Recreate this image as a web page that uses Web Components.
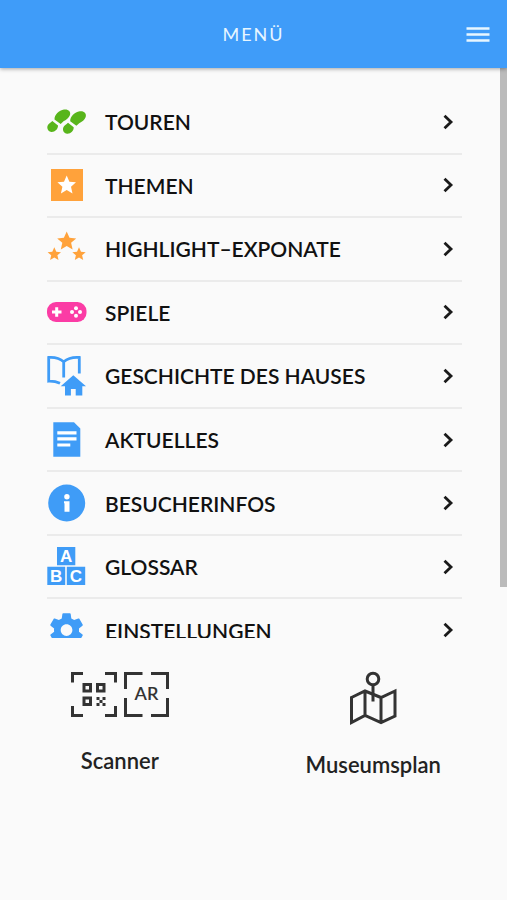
<!DOCTYPE html>
<html lang="de">
<head>
<meta charset="utf-8">
<meta name="viewport" content="width=device-width, initial-scale=1">
<title>Menü</title>
<style>
    body {
        margin: 0;
        background: #fafafa;
        font-family: Lato, "Noto Sans", sans-serif;
    }
</style>
</head>
<body>
<museum-app>
    <app-header slot="header">MENÜ</app-header>

    <menu-item href="#touren">
        <svg slot="icon" viewBox="0 0 40 40" fill="#58b51b">
            <path d="M7.500 17.500C7.300 13 12 8 17 7.500C21.500 7 24 9.500 23 13C22 16 19 18 16.500 19.300L13.700 22Z"/>
            <path d="M5.300 19L11 23.500C11.200 27 8 30.200 4.500 30C1 29.600 -.5 26.500 .7 23.500C1.500 21.500 3.500 20.800 5.300 19Z"/>
            <path d="M23.200 19.200C23 14.700 27.700 9.700 32.700 9.200C37.200 8.700 39.700 11.200 38.700 15C37.700 18 35 19.800 32.200 21.200L29.400 23.800Z"/>
            <path d="M21 20.800L26.700 25.300C26.900 28.800 23.700 32 20.200 31.800C16.700 31.400 15.200 28.300 16.400 25.300C17.200 23.300 19.200 22.600 21 20.800Z"/>
        </svg>
        TOUREN
    </menu-item>
    <menu-item href="#themen">
        <svg slot="icon" viewBox="0 0 40 40">
            <rect x="4" y="4" width="32" height="32" fill="#ffa23b"/>
            <path fill="#fff" d="M19.700 10.500L22.400 16.800L29 17.300L24 21.700L25.500 28.500L19.700 25L13.900 28.500L15.400 21.700L10.400 17.300L17 16.800Z"/>
        </svg>
        THEMEN
    </menu-item>
    <menu-item href="#highlights">
        <svg slot="icon" viewBox="0 0 40 40" fill="#ffa23b">
            <path d="M19.700 2.500L22.500 8.800L29.200 9.400L24.100 13.800L25.600 20.500L19.700 17L13.800 20.500L15.300 13.800L10.200 9.400L16.900 8.800Z"/>
            <path d="M7.300 18.200L9.300 22.700L14 23.200L10.400 26.300L11.500 31L7.300 28.600L3.100 31L4.200 26.300L.6 23.200L5.300 22.700Z"/>
            <path d="M32 18.200L34 22.700L38.700 23.200L35.100 26.300L36.200 31L32 28.600L27.800 31L28.900 26.300L25.300 23.200L30 22.700Z"/>
        </svg>
        HIGHLIGHT–EXPONATE
    </menu-item>
    <menu-item href="#spiele">
        <svg slot="icon" viewBox="0 0 40 40">
            <rect x="0" y="10" width="39.500" height="20" rx="9" fill="#fb3ca5"/>
            <path d="M5 20H14.500M9.700 15.200V24.800" stroke="#fff" stroke-width="3"/>
            <g fill="#fff">
                <circle cx="29" cy="16.200" r="2"/>
                <circle cx="29" cy="23.800" r="2"/>
                <circle cx="25" cy="20" r="2"/>
                <circle cx="33" cy="20" r="2"/>
            </g>
        </svg>
        SPIELE
    </menu-item>
    <menu-item href="#geschichte">
        <svg slot="icon" viewBox="0 0 40 40">
            <path fill="none" stroke="#3f9cf7" stroke-width="2.800" d="M13 27.200Q8 25 1.700 25.200V1.500Q11 .8 16.700 5.800Q22.500 .8 32.300 1.500V17.500M16.700 5.800V21.500"/>
            <path fill="#3f9cf7" d="M26.300 19.200L39 30.300H35.300V39.500H28.700V33H23.900V39.500H18V30.300H13.700Z"/>
        </svg>
        GESCHICHTE DES HAUSES
    </menu-item>
    <menu-item href="#aktuelles">
        <svg slot="icon" viewBox="0 0 40 40">
            <path fill="#3f9cf7" d="M6.300 2.300H27L33.300 8.500V36.700H6.300Z"/>
            <path stroke="#fff" stroke-width="3.200" d="M10.300 12.800H29.500M10.300 18.900H29.500M10.300 25H23.300"/>
        </svg>
        AKTUELLES
    </menu-item>
    <menu-item href="#besucherinfos">
        <svg slot="icon" viewBox="0 0 40 40">
            <circle cx="19.700" cy="20" r="18.500" fill="#3f9cf7"/>
            <circle cx="19.900" cy="13.800" r="2.700" fill="#fff"/>
            <path fill="#fff" d="M17 18.200H22.500V28.800H17.500V20.200H17Z"/>
        </svg>
        BESUCHERINFOS
    </menu-item>
    <menu-item href="#glossar">
        <svg slot="icon" viewBox="0 0 40 40">
            <path fill="#3f9cf7" d="M10 0H28.300V18.300H10ZM.300 19.700H18.200V38H.300ZM19.800 19.700H38.200V38H19.800Z"/>
            <g fill="#fff" font-family="Liberation Sans, sans-serif" font-size="17" font-weight="700" text-anchor="middle">
                <text x="19.200" y="15.200">A</text>
                <text x="9.200" y="34.800">B</text>
                <text x="29" y="34.800">C</text>
            </g>
        </svg>
        GLOSSAR
    </menu-item>
    <menu-item href="#einstellungen">
        <svg slot="icon" viewBox="0 0 40 40">
            <path fill="#3f9cf7" transform="translate(-.500 0) scale(1.670)" d="M19.430 12.980c.04-.32.07-.64.07-.98s-.03-.66-.07-.98l2.110-1.650c.19-.15.24-.42.12-.64l-2-3.460c-.12-.22-.39-.3-.61-.22l-2.490 1c-.52-.4-1.080-.73-1.690-.98l-.38-2.650C14.460 2.180 14.250 2 14 2h-4c-.25 0-.46.18-.49.42l-.38 2.650c-.61.25-1.170.59-1.690.98l-2.490-1c-.23-.09-.49 0-.61.22l-2 3.460c-.13.22-.07.49.12.64l2.110 1.650c-.04.32-.07.65-.07.98s.03.66.07.98l-2.110 1.650c-.19.15-.24.42-.12.64l2 3.460c.12.22.39.3.61.22l2.490-1c.52.4 1.080.73 1.690.98l.38 2.650c.03.24.24.42.49.42h4c.25 0 .46-.18.49-.42l.38-2.650c.61-.25 1.170-.59 1.690-.98l2.490 1c.23.09.49 0 .61-.22l2-3.460c.12-.22.07-.49-.12-.64l-2.110-1.650zM12 15.500c-1.930 0-3.500-1.570-3.500-3.500s1.570-3.500 3.500-3.500 3.500 1.570 3.500 3.500-1.570 3.500-3.500 3.500z"/>
        </svg>
        EINSTELLUNGEN
    </menu-item>

    <quick-link slot="footer" href="#scanner">
        <svg slot="icon" width="98" height="50" viewBox="0 0 98 50" fill="none" stroke="#333" stroke-width="3">
            <path d="M1.500 11.500V2.500H12M34 2.500H44.500V11.500M44.500 35V44.500H34M12 44.500H1.500V35"/>
            <path d="M54.500 18V2.500H71.500M80 2.500H96.500V18M96.500 27V44.500H80M71.500 44.500H54.500V27"/>
            <path d="M13 13.500H19.500V20H13ZM26.500 13.500H33V20H26.500ZM13 27H19.500V33.500H13Z"/>
            <path fill="#333" stroke="none" d="M25.500 26h3v3h-3zM31.500 26h3v3h-3zM28.500 29h3v3h-3zM25.500 32h3v3h-3zM31.500 32h3v3h-3z"/>
            <text x="75.500" y="29" fill="#333" stroke="none" font-size="18" font-weight="600" font-family="Lato, sans-serif" text-anchor="middle">AR</text>
        </svg>
        Scanner
    </quick-link>
    <quick-link slot="footer" href="#museumsplan">
        <svg slot="icon" width="48" height="54" viewBox="0 0 48 54" fill="none" stroke="#333" stroke-width="3">
            <path d="M2.500 26.500L16 20L32 26.500L46 20V45L32 51.500L16 44.500L2.500 51.500ZM16 20V44.500M32 26.500V51.500"/>
            <circle cx="24" cy="8" r="5.800"/>
            <path d="M24 14V30.500"/>
        </svg>
        Museumsplan
    </quick-link>
</museum-app>

<script>
class MuseumApp extends HTMLElement {
    constructor() {
        super();
        this.attachShadow({ mode: 'open' });
    }

    connectedCallback() {
        const style = `
            <style>
                :host {
                    display: flex;
                    flex-direction: column;
                    height: 100vh;
                    overflow: hidden;
                }
                main {
                    flex: 1;
                    min-height: 0;
                    position: relative;
                    overflow: hidden;
                    box-sizing: border-box;
                    padding: 23px 45px 0 47px;
                }
                nav {
                    display: grid;
                    grid-template-rows: repeat(9, 1fr);
                    height: 572px;
                }
                .thumb {
                    position: absolute;
                    top: 0;
                    right: 0;
                    width: 7px;
                    height: 91%;
                    background: #bbb;
                }
                footer {
                    display: flex;
                    min-height: 229px;
                    padding-top: 33px;
                }
            </style>
        `;

        const template = `
            <slot name="header"></slot>
            <main>
                <nav><slot></slot></nav>
                <div class="thumb"></div>
            </main>
            <footer><slot name="footer"></slot></footer>
        `;

        this.shadowRoot.innerHTML = style + template;
    }
}

class AppHeader extends HTMLElement {
    constructor() {
        super();
        this.attachShadow({ mode: 'open' });
    }

    connectedCallback() {
        const style = `
            <style>
                :host {
                    display: block;
                    flex: none;
                    position: relative;
                    z-index: 1;
                    background: #3f9cf9;
                    color: #e8f6ff;
                    box-shadow: 0 1px 4px rgba(0, 0, 0, 0.35);
                }
                header {
                    display: grid;
                    grid-template-columns: 1fr auto 1fr;
                    align-items: center;
                    height: 68px;
                    padding: 0 16px;
                }
                h1 {
                    grid-column: 2;
                    margin: 0;
                    font-size: 18px;
                    font-weight: 400;
                    letter-spacing: 2px;
                }
                button {
                    justify-self: end;
                    display: flex;
                    padding: 0;
                    border: none;
                    background: none;
                    color: inherit;
                    cursor: pointer;
                }
            </style>
        `;

        const template = `
            <header>
                <h1><slot></slot></h1>
                <button aria-label="Menü öffnen">
                    <svg width="26" height="18" viewBox="0 0 26 18" stroke="currentColor" stroke-width="2.500">
                        <path d="M1.500 3.500H24.500M1.500 9.500H24.500M1.500 15.500H24.500"/>
                    </svg>
                </button>
            </header>
        `;

        this.shadowRoot.innerHTML = style + template;
    }
}

class MenuItem extends HTMLElement {
    constructor() {
        super();
        this.attachShadow({ mode: 'open' });
    }

    connectedCallback() {
        const href = this.getAttribute('href') || '#';

        const style = `
            <style>
                :host {
                    display: flex;
                    border-bottom: 2px solid #ebebeb;
                }
                a {
                    flex: 1;
                    display: flex;
                    align-items: center;
                    gap: 18px;
                    padding-right: 8px;
                    color: #111;
                    font-size: 21px;
                    font-weight: 600;
                    text-decoration: none;
                }
                .label {
                    flex: 1;
                }
                ::slotted(svg) {
                    display: block;
                    width: 40px;
                    height: 40px;
                }
            </style>
        `;

        const template = `
            <a href="${href}">
                <slot name="icon"></slot>
                <span class="label"><slot></slot></span>
                <svg width="12" height="16" viewBox="0 0 12 16" fill="none" stroke="#1a1a1a" stroke-width="2.800">
                    <path d="M2.500 1.800L9 8L2.500 14.200"/>
                </svg>
            </a>
        `;

        this.shadowRoot.innerHTML = style + template;
    }
}

class QuickLink extends HTMLElement {
    constructor() {
        super();
        this.attachShadow({ mode: 'open' });
    }

    connectedCallback() {
        const href = this.getAttribute('href') || '#';

        const style = `
            <style>
                :host {
                    flex: 1;
                    padding-right: 14px;
                }
                a {
                    display: flex;
                    flex-direction: column;
                    align-items: center;
                    gap: 28px;
                    color: #222;
                    font-size: 22px;
                    line-height: 24px;
                    font-weight: 600;
                    text-decoration: none;
                }
            </style>
        `;

        const template = `
            <a href="${href}">
                <slot name="icon"></slot>
                <span><slot></slot></span>
            </a>
        `;

        this.shadowRoot.innerHTML = style + template;
    }
}

customElements.define('museum-app', MuseumApp);
customElements.define('app-header', AppHeader);
customElements.define('menu-item', MenuItem);
customElements.define('quick-link', QuickLink);
</script>
</body>
</html>
